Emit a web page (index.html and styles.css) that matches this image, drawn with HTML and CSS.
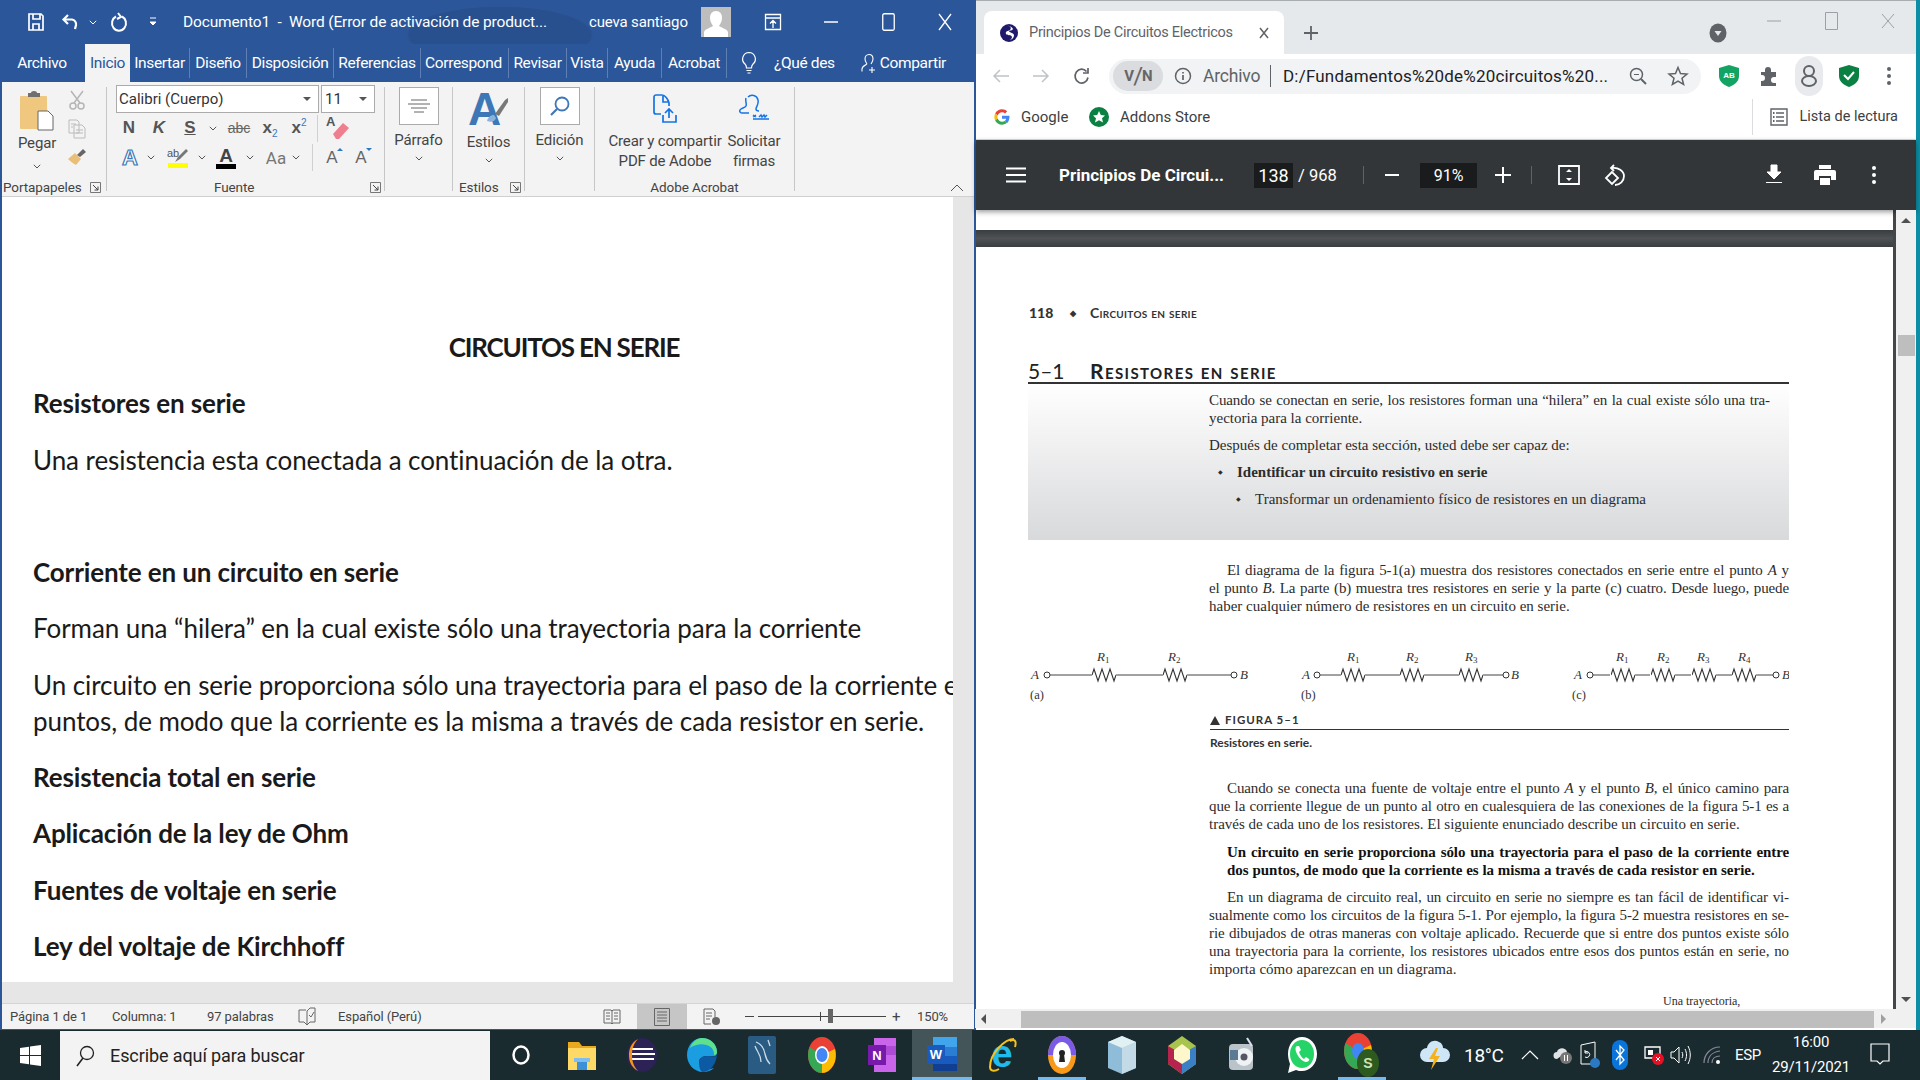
FILE: index.html
```html
<!DOCTYPE html>
<html lang="es">
<head>
<meta charset="utf-8">
<title>Word y Chrome</title>
<link rel="stylesheet" href="styles.css">
</head>
<body>
<svg class="defs" aria-hidden="true">
  <symbol id="chev" viewBox="0 0 8 5"><path d="M.8.8 4 4 7.2.8" fill="none" stroke="#555" stroke-width="1"/></symbol>
  <symbol id="launch" viewBox="0 0 11 11"><path d="M.5.5h10v10H.5z" fill="none" stroke="#777"/><path d="M3 3l5 5M8 4.5V8H4.5" fill="none" stroke="#444"/></symbol>
  <symbol id="res" viewBox="0 0 24 16"><path d="M0 8l2-6 4 12 4-12 4 12 4-12 4 12 2-6" fill="none" stroke="#333" stroke-width="1.1"/></symbol>
</svg>
<div class="desktop">
  <div class="windows">
    <section class="word">
      <header class="wtitle">
        <svg class="ic" width="18" height="20" viewBox="0 0 18 20"><path d="M2 2h12l2 2v14H2zM6 2v5h7V2M6 18v-6h6v6" fill="none" stroke="#fff" stroke-width="1.7"/></svg>
        <svg class="ic" width="20" height="20" viewBox="0 0 20 20"><path d="M7 3 2.500 7.500 7 12M3 7.500h8a5 5 0 0 1 4 5.500l-1 4" fill="none" stroke="#fff" stroke-width="2.200"/></svg>
        <svg class="ic" width="8" height="5"><path d="M.8.800 4 4 7.200.800" fill="none" stroke="#fff"/></svg>
        <svg class="ic" width="18" height="20" viewBox="0 0 18 20"><path d="M6 4.500a7 7.500 0 1 0 6 0M8 1l3 4-4 2" fill="none" stroke="#fff" stroke-width="2"/></svg>
        <svg class="ic" width="8" height="10" viewBox="0 0 8 10"><path d="M1 1h6M1 5l3 3 3-3z" fill="#fff" stroke="#fff"/></svg>
        <span></span>
        <span class="wt-name">Documento1&nbsp; - &nbsp;Word (Error de activación de product...</span>
        <span class="wt-user">cueva santiago</span>
        <svg class="ic" width="30" height="30" viewBox="0 0 30 30"><path fill="#bdbdbd" d="M0 0h30v30H0z"/><path fill="#fff" d="M15 4c4 0 6 3 6 7s-2 6-3 8c3 2 8 3 9 6v5H3v-5c1-3 6-4 9-6-1-2-3-4-3-8s2-7 6-7z"/></svg>
        <svg class="ic" width="18" height="18" viewBox="0 0 18 18"><path d="M1.500 1.500h15v15h-15zM1.500 5h15M9 15V8M6 10.500l3-3 3 3" fill="none" stroke="#fff" stroke-width="1.300"/></svg>
        <svg class="ic" width="14" height="2"><path d="M0 1h14" stroke="#fff" stroke-width="1.500"/></svg>
        <svg class="ic" width="13" height="18"><rect x=".75" y=".75" width="11.500" height="16.500" rx="1.500" fill="none" stroke="#fff" stroke-width="1.300"/></svg>
        <svg class="ic" width="14" height="18"><path d="M1 1l12 16M13 1 1 17" stroke="#fff" stroke-width="1.300"/></svg>
      </header>
      <nav class="wtabs">
        <span class="tab tab-arch">Archivo</span>
        <span class="tab tab-act">Inicio</span>
        <span class="tab tab-ins">Insertar</span>
        <span class="tab tab-dis">Diseño</span>
        <span class="tab tab-dip">Disposición</span>
        <span class="tab tab-ref">Referencias</span>
        <span class="tab tab-cor">Correspond</span>
        <span class="tab tab-rev">Revisar</span>
        <span class="tab tab-vis">Vista</span>
        <span class="tab tab-ayu">Ayuda</span>
        <span class="tab tab-acr">Acrobat</span>
        <svg class="tab-bulb" width="16" height="24" viewBox="0 0 16 24"><path d="M8 1.500a6.500 6.500 0 0 0-4 11.500c1 1 1.500 3 1.500 4h5c0-1 .5-3 1.500-4A6.500 6.500 0 0 0 8 1.500zM5.500 19.500h5M6.500 22h3" fill="none" stroke="#fff" stroke-width="1.200"/></svg>
        <span class="tab-tell">¿Qué des</span>
        <svg class="tab-person" width="17" height="20" viewBox="0 0 17 20"><path d="M8 1.500c2.500 0 4 2 4 4.500s-1.500 4-2 5M6 11c-1.500 1-5 2-5 5v2.500M8 1.500c-2.500 0-4 2-4 4.500s1.500 4 2 5M11 14v6M8 17h6" fill="none" stroke="#fff" stroke-width="1.100"/></svg>
        <span class="tab-share">Compartir</span>
      </nav>
      <div class="ribbon">
        <div class="group g-clip">
          <div class="g-body clip-body">
            <div class="big-btn">
              <svg width="36" height="42" viewBox="0 0 36 42"><rect x="1" y="5" width="27" height="33" rx="1" fill="#efc77f"/><path d="M9 5V2h3a3 2 0 0 1 6 0h3v4H9z" fill="#6f6f6f"/><path d="M19 20h10l5 5v14H19z" fill="#fff" stroke="#666"/></svg>
              <span class="rb-t pegar">Pegar</span>
              <svg class="chev"><use href="#chev"/></svg>
            </div>
            <div class="clip-tools">
              <svg width="18" height="20" viewBox="0 0 18 20"><path d="M3 1l9 12M15 1 6 13" stroke="#b5b5b5" stroke-width="1.500"/><circle cx="5" cy="16" r="3" fill="none" stroke="#b5b5b5" stroke-width="1.500"/><circle cx="13" cy="16" r="3" fill="none" stroke="#b5b5b5" stroke-width="1.500"/></svg>
              <svg width="18" height="20" viewBox="0 0 18 20"><path d="M1 1h8l2 2v11H1zM6 6h8l3 3v10H6z" fill="#f3f3f3" stroke="#bbb"/><path d="M3 5h5M3 8h2M8 11h7M8 14h7" stroke="#bbb"/></svg>
              <svg width="20" height="18" viewBox="0 0 20 18"><path d="M1 11l7-6 6 6-5 6c-2-1-5-3-8-6z" fill="#e9bf77"/><path d="M10 7l6-6 3 3-6 5z" fill="#666"/></svg>
            </div>
          </div>
          <div class="g-label lab-clip"><span>Portapapeles</span><svg class="launch"><use href="#launch"/></svg></div>
        </div>
        <div class="group g-font">
          <div class="g-body font-body">
            <div class="font-row1">
              <div class="combo combo-font"><span>Calibri (Cuerpo)</span><i class="caret"></i></div>
              <div class="combo combo-size"><span>11</span><i class="caret"></i></div>
            </div>
            <div class="font-row2">
              <b class="fmt">N</b><b class="fmt"><em>K</em></b><b class="fmt und">S</b><svg class="chev"><use href="#chev"/></svg>
              <span class="fmt abc">abc</span><b class="fmt">x<sub class="sub">2</sub></b><b class="fmt">x<sup class="sup">2</sup></b>
              <span></span><i class="vsep"></i>
              <svg width="26" height="26" viewBox="0 0 26 26"><path d="M9 19l10-11 6 5-10 11h-3z" fill="#ee7f8e"/><text x="2" y="11" class="svg-a">A</text></svg>
            </div>
            <div class="font-row3">
              <span class="a-fx">A</span><svg class="chev"><use href="#chev"/></svg>
              <span class="hl"><svg width="22" height="15" viewBox="0 0 22 15"><text x="0" y="9" class="svg-ab">ab</text><path d="M8 14l3-5 8-8 2 2-8 8z" fill="#777"/></svg><i class="bar bar-y"></i></span><svg class="chev"><use href="#chev"/></svg>
              <span class="colA"><b>A</b><i class="bar bar-k"></i></span><svg class="chev"><use href="#chev"/></svg>
              <span></span><span class="aa">Aa</span><svg class="chev"><use href="#chev"/></svg>
              <span></span><i class="vsep"></i><span></span>
              <span class="grow">A<i class="up"></i></span><span class="grow">A<i class="down"></i></span>
            </div>
          </div>
          <div class="g-label lab-font"><span>Fuente</span><svg class="launch"><use href="#launch"/></svg></div>
        </div>
        <div class="group g-par">
          <div class="g-body col-c">
            <div class="boxbtn"><svg width="22" height="14" viewBox="0 0 22 14"><path d="M3 1h16M0 5h22M3 9h16M6 13h10" stroke="#666"/></svg></div>
            <span class="rb-t rb-box">Párrafo</span>
            <svg class="chev"><use href="#chev"/></svg>
          </div>
        </div>
        <div class="group g-sty">
          <div class="g-body col-c">
            <svg class="sty-ic" width="42" height="38" viewBox="0 0 42 38"><text x="0" y="35" class="svg-sty">A</text><path d="M19 31c1-4 4-6 7-6l2 3c-1 3-4 5-9 3z" fill="#8ab3dc"/><path d="M27 24l10-14 3-2 0 4-9 14z" fill="#787878"/></svg>
            <span class="rb-t">Estilos</span>
            <svg class="chev"><use href="#chev"/></svg>
          </div>
          <div class="g-label lab-sty"><span>Estilos</span><svg class="launch"><use href="#launch"/></svg></div>
        </div>
        <div class="group g-edi">
          <div class="g-body col-c">
            <div class="boxbtn"><svg width="22" height="22" viewBox="0 0 22 22"><circle cx="13" cy="9" r="6.500" fill="none" stroke="#3e77b6" stroke-width="1.800"/><path d="M8 14l-6 6" stroke="#3e77b6" stroke-width="2.200"/></svg></div>
            <span class="rb-t rb-box">Edición</span>
            <svg class="chev"><use href="#chev"/></svg>
          </div>
        </div>
        <div class="group g-acr">
          <div class="g-body acr-body">
            <div class="acr-btn">
              <svg width="24" height="30" viewBox="0 0 24 30"><path d="M8 20H3a2 2 0 0 1-2-2V3a2 2 0 0 1 2-2h6c3 0 6 4 7 8v3M10 2v6h6M16 15v9M12 19l4-4 4 4M10 21v7h13v-7" fill="none" stroke="#1473e6" stroke-width="1.700"/></svg>
              <span class="rb-t">Crear y compartir<br>PDF de Adobe</span>
            </div>
            <div class="acr-btn">
              <svg width="32" height="30" viewBox="0 0 32 30"><path d="M10 3c3-3 9-2 10 3 1 4-2 7-2 9 0 1 1 2 3 2M11 19H4c-1 0-3-1-2-3 1-2 5-2 6-4s-1-5 0-8M15 25h16M15 21l3 2m0-2-3 2M21 23l2-2 1 2 2-2 1 2 2-2" fill="none" stroke="#1473e6" stroke-width="1.500"/></svg>
              <span class="rb-t">Solicitar<br>firmas</span>
            </div>
          </div>
          <div class="g-label lab-acr"><span>Adobe Acrobat</span></div>
        </div>
        <svg class="collapse" width="14" height="8" viewBox="0 0 14 8"><path d="M1 7l6-6 6 6" fill="none" stroke="#555"/></svg>
      </div>
      <div class="docarea">
        <article class="page">
          <p class="pg pg-title">CIRCUITOS EN SERIE</p>
          <p class="pg pg-b">Resistores en serie</p>
          <p class="pg">Una resistencia esta conectada a continuación de la otra.</p>
          <p class="pg">&nbsp;</p>
          <p class="pg pg-b">Corriente en un circuito en serie</p>
          <p class="pg">Forman una “hilera” en la cual existe sólo una trayectoria para la corriente</p>
          <p class="pg">Un circuito en serie proporciona sólo una trayectoria para el paso de la corriente e<br>puntos, de modo que la corriente es la misma a través de cada resistor en serie.</p>
          <p class="pg pg-b">Resistencia total en serie</p>
          <p class="pg pg-b">Aplicación de la ley de Ohm</p>
          <p class="pg pg-b">Fuentes de voltaje en serie</p>
          <p class="pg pg-b">Ley del voltaje de Kirchhoff</p>
        </article>
      </div>
      <div class="docbottom"></div>
      <footer class="wstatus">
        <span class="st st-pag">Página 1 de 1</span>
        <span class="st st-col">Columna: 1</span>
        <span class="st st-pal">97 palabras</span>
        <svg class="st-book" width="18" height="20" viewBox="0 0 18 20"><path d="M8 3H1v12h5l3 3V4M9 4l3-3h5v14h-5l-3 3M11 8l2 2 3-5" fill="none" stroke="#666"/></svg>
        <span class="st st-lang">Español (Perú)</span>
        <svg class="st-read" width="18" height="16" viewBox="0 0 18 16"><path d="M1 1h7l1 1 1-1h7v13h-7l-1 1-1-1H1zM9 2v12M3 4h4M3 7h4M3 10h4M11 4h4M11 7h4M11 10h4" fill="none" stroke="#666"/></svg>
        <span class="st-printbtn"><svg width="16" height="18" viewBox="0 0 16 18"><path d="M.5.500h15v17H.500zM3 4h10M3 7h10M3 10h10M3 13h10" fill="none" stroke="#666"/></svg></span>
        <svg class="st-web" width="18" height="18" viewBox="0 0 18 18"><path d="M1 1h9l2 2v6M1 1v15h7M3 5h6M3 8h6M3 11h4" fill="none" stroke="#666"/><circle cx="13" cy="13" r="4" fill="#666"/></svg>
        <i class="z-minus"></i>
        <div class="z-track"><i class="z-tick"></i><i class="z-thumb"></i></div>
        <span class="z-plus">+</span>
        <span class="st st-zoom">150%</span>
      </footer>
    </section>
    <section class="chrome">
      <div class="c-tabs">
        <span></span>
        <div class="c-tab">
          <svg width="18" height="18" viewBox="0 0 18 18"><circle cx="9" cy="9" r="9" fill="#1f1a6b"/><path d="M6 2c4-1 6 2 4 4-2 1-5 1-4 4 1 2 5 0 6 3 0 2-2 3-4 3 5 0 6-3 6-5-1-3-5-2-5-4 1-1 3 0 4-2-1-2-4-4-7-3z" fill="#fff"/></svg>
          <span class="c-tabtext">Principios De Circuitos Electricos</span>
          <svg class="c-tabx" width="10" height="12"><path d="M1 1l8 10M9 1 1 11" stroke="#5f6368" stroke-width="1.500"/></svg>
        </div>
        <svg class="ic c-low" width="14" height="14"><path d="M7 0v14M0 7h14" stroke="#5f6368" stroke-width="1.800"/></svg>
        <span></span>
        <svg class="ic c-low" width="18" height="20"><ellipse cx="9" cy="10" rx="8.500" ry="9.500" fill="#5f6368"/><path d="M5.500 8h7L9 13z" fill="#e6e9ec"/></svg>
        <span></span>
        <svg class="ic c-ctl" width="14" height="2"><path d="M0 1h14" stroke="#9aa0a6"/></svg>
        <svg class="ic c-ctl" width="13" height="18"><path d="M.5.500h12v17H.500z" fill="none" stroke="#9aa0a6"/></svg>
        <svg class="ic c-ctl" width="14" height="16"><path d="M1 1l12 14M13 1 1 15" stroke="#9aa0a6"/></svg>
      </div>
      <div class="c-bar">
        <svg class="ic" width="16" height="14"><path d="M16 7H2M7 1 1 7l6 6" fill="none" stroke="#c0c3c7" stroke-width="1.500"/></svg>
        <svg class="ic" width="16" height="14"><path d="M0 7h14M9 1l6 6-6 6" fill="none" stroke="#c0c3c7" stroke-width="1.500"/></svg>
        <svg class="ic" width="18" height="18" viewBox="0 0 18 18"><path d="M15 10.500a6.500 7 0 1 1-1.500-6M15 1v5h-5" fill="none" stroke="#5f6368" stroke-width="1.700"/></svg>
        <div class="omni">
          <span class="vpn">V<i>/</i>N</span>
          <svg class="om-info" width="18" height="18"><circle cx="9" cy="9" r="7.500" fill="none" stroke="#5f6368" stroke-width="1.500"/><path d="M9 8v5M9 5v1.500" stroke="#5f6368" stroke-width="1.700"/></svg>
          <span class="om-arch">Archivo</span>
          <i class="om-sep"></i>
          <span class="om-url">D:/Fundamentos%20de%20circuitos%20...</span>
          <svg class="om-z" width="18" height="18"><circle cx="7.500" cy="7.500" r="6" fill="none" stroke="#5f6368" stroke-width="1.500"/><path d="M12 12l5 5" stroke="#5f6368" stroke-width="2"/><path d="M5 7.500h5" stroke="#5f6368"/></svg>
          <svg class="om-star" width="20" height="20" viewBox="0 0 20 20"><path d="M10 1.500l2.500 6 6.500.500-5 4.200 1.600 6.300-5.600-3.400-5.600 3.400L6 12.200 1 8l6.500-.500z" fill="none" stroke="#5f6368" stroke-width="1.500"/></svg>
        </div>
        <div class="c-ext">
          <svg width="20" height="22" viewBox="0 0 20 22"><path d="M10 0 20 3v8c0 6-5 9-10 11C5 20 0 17 0 11V3z" fill="#13a463"/><text x="10" y="13" class="svg-abt">AB</text></svg>
          <svg width="20" height="20" viewBox="0 0 20 20"><path d="M2 6h4V4a3 3 0 0 1 6 0v2h5v5h-2a3 3 0 0 0 0 6h2v3H2v-5h1a3 3 0 0 0 0-6H2z" fill="#5f6368"/></svg>
          <span class="c-avatar"><svg width="16" height="22" viewBox="0 0 16 22"><circle cx="8" cy="6" r="5" fill="none" stroke="#5f6368" stroke-width="2"/><ellipse cx="8" cy="16" rx="7" ry="5" fill="none" stroke="#5f6368" stroke-width="2"/></svg></span>
          <svg width="20" height="22" viewBox="0 0 20 22"><path d="M10 0 20 3v8c0 6-5 9-10 11C5 20 0 17 0 11V3z" fill="#0b8043"/><path d="M5 10l4 4 6-7" fill="none" stroke="#fff" stroke-width="2"/></svg>
          <svg width="4" height="18"><circle cx="2" cy="2" r="2" fill="#5f6368"/><circle cx="2" cy="9" r="2" fill="#5f6368"/><circle cx="2" cy="16" r="2" fill="#5f6368"/></svg>
        </div>
      </div>
      <div class="c-marks">
        <svg width="16" height="16" viewBox="0 0 48 48"><path fill="#ea4335" d="M24 10c3.500 0 6.700 1.300 9.100 3.500l6.600-6.600C35.700 3.200 30.200 1 24 1 15 1 7.200 6.200 3.400 13.700l7.700 6C13 14 18 10 24 10z"/><path fill="#4285f4" d="M46.500 24.500c0-1.600-.2-3.100-.4-4.500H24v9h12.700c-.6 3-2.200 5.400-4.700 7.100l7.300 5.700c4.300-4 6.700-9.900 7.200-17.300z"/><path fill="#fbbc05" d="M11.100 28.300C10.600 26.900 10.300 25.500 10.300 24s.3-2.900.8-4.300l-7.700-6C1.900 16.800 1 20.300 1 24s.9 7.200 2.400 10.300z"/><path fill="#34a853" d="M24 47c6.200 0 11.400-2 15.300-5.500L32 35.800c-2 1.400-4.700 2.200-8 2.200-6 0-11-4-12.900-9.700l-7.700 6C7.200 41.800 15 47 24 47z"/></svg>
        <span class="mk-g">Google</span>
        <svg class="mk-ic" width="20" height="20"><circle cx="10" cy="10" r="10" fill="#0b8043"/><path d="M10 4l1.800 4 4.200.400-3 2.800 1 4.300-4-2.300-4 2.300 1-4.300-3-2.800 4.200-.400z" fill="#fff"/></svg>
        <span class="mk-a">Addons Store</span>
        <i class="mk-sep"></i>
        <svg class="mk-list" width="18" height="18" viewBox="0 0 18 18"><path d="M1 1h16v16H1zM6 5h8M6 9h8M6 13h8" fill="none" stroke="#5f6368" stroke-width="1.400"/><path d="M3 4h1.500v2H3zM3 8h1.500v2H3zM3 12h1.500v2H3z" fill="#5f6368"/></svg>
        <span class="mk-r">Lista de lectura</span>
      </div>
      <div class="p-bar">
        <svg class="ic" width="20" height="16"><path d="M0 1.500h20M0 8h20M0 14.500h20" stroke="#fff" stroke-width="2"/></svg>
        <span></span>
        <span class="p-title">Principios De Circui...</span>
        <span></span>
        <span class="p-num p-big">138</span>
        <span></span>
        <span class="p-of">/ 968</span>
        <span></span>
        <i class="p-sep"></i>
        <svg class="ic" width="14" height="2"><path d="M0 1h14" stroke="#fff" stroke-width="2"/></svg>
        <span class="p-num">91%</span>
        <svg class="ic" width="16" height="16"><path d="M8 0v16M0 8h16" stroke="#fff" stroke-width="2"/></svg>
        <span></span>
        <i class="p-sep"></i>
        <span></span>
        <svg class="ic" width="22" height="20" viewBox="0 0 22 20"><path d="M1 1h20v18H1z" fill="none" stroke="#fff" stroke-width="1.800"/><path d="M8 7l3-3 3 3zM8 13l3 3 3-3z" fill="#fff"/></svg>
        <svg class="ic" width="22" height="22" viewBox="0 0 22 22"><path d="M10 1l-3 3 3 3M8 4c6-1 12 3 12 8s-4 9-9 9" fill="none" stroke="#fff" stroke-width="1.800"/><path d="M8 8l-6 6 6 6 6-6z" fill="none" stroke="#fff" stroke-width="1.800"/></svg>
        <span></span>
        <svg class="ic" width="16" height="20" viewBox="0 0 16 20"><path d="M5 0h6v7h4l-7 7-7-7h4zM0 17.500h16" fill="#fff" stroke="#fff" stroke-width="1"/></svg>
        <span></span>
        <svg class="ic" width="22" height="20" viewBox="0 0 22 20"><path d="M5 0h12v4H5zM2 5h18a2 2 0 0 1 2 2v8h-5v-4H5v4H0V7a2 2 0 0 1 2-2zM6 13h10v7H6z" fill="#fff"/></svg>
        <span></span>
        <svg class="ic" width="4" height="18"><circle cx="2" cy="2" r="2" fill="#fff"/><circle cx="2" cy="9" r="2" fill="#fff"/><circle cx="2" cy="16" r="2" fill="#fff"/></svg>
      </div>
      <div class="p-body">
        <div class="p-main">
          <div class="p-top"></div>
          <div class="p-gap"></div>
          <article class="p-page">
            <div class="bk-head"><b>118</b><i class="dia">◆</i><span>Circuitos en serie</span></div>
            <h2 class="bk-h"><span>5–1</span><span class="bk-ht">Resistores en serie</span></h2>
            <div class="bk-box">
              <div class="ln j w561">Cuando se conectan en serie, los resistores forman una “hilera” en la cual existe sólo una tra-</div>
              <div class="ln">yectoria para la corriente.</div>
              <div class="ln gap9">Después de completar esta sección, usted debe ser capaz de:</div>
              <div class="ln gap9 bl1"><i class="dia2">◆</i><b>Identificar un circuito resistivo en serie</b></div>
              <div class="ln gap9 bl2"><i class="dia2">◆</i>Transformar un ordenamiento físico de resistores en un diagrama</div>
            </div>
            <div class="txt gap21">
              <div class="ln j ind">El diagrama de la figura 5-1(a) muestra dos resistores conectados en serie entre el punto <em>A</em> y</div>
              <div class="ln j">el punto <em>B</em>. La parte (b) muestra tres resistores en serie y la parte (c) cuatro. Desde luego, puede</div>
              <div class="ln">haber cualquier número de resistores en un circuito en serie.</div>
            </div>
            <svg class="bk-fig" width="761" height="92" viewBox="1028 615 761 92">
              <g class="f-line"><path d="M1050 675h42M1116 675h47M1187 675h44M1320 675h21M1365 675h35M1424 675h35M1483 675h20M1593 675h17M1635 675h15M1675 675h16M1716 675h16M1756 675h17"/></g>
              <g class="f-cir"><circle cx="1047" cy="675" r="3"/><circle cx="1234" cy="675" r="3"/><circle cx="1317" cy="675" r="3"/><circle cx="1506" cy="675" r="3"/><circle cx="1590" cy="675" r="3"/><circle cx="1776" cy="675" r="3"/></g>
              <use href="#res" x="1092" y="667" width="24" height="16"/><use href="#res" x="1163" y="667" width="24" height="16"/>
              <use href="#res" x="1341" y="667" width="24" height="16"/><use href="#res" x="1400" y="667" width="24" height="16"/><use href="#res" x="1459" y="667" width="24" height="16"/>
              <use href="#res" x="1611" y="667" width="24" height="16"/><use href="#res" x="1651" y="667" width="24" height="16"/><use href="#res" x="1692" y="667" width="24" height="16"/><use href="#res" x="1732" y="667" width="24" height="16"/>
              <g class="f-t">
                <text x="1031" y="679">A</text><text x="1240" y="679">B</text><text x="1302" y="679">A</text><text x="1511" y="679">B</text><text x="1574" y="679">A</text><text x="1782" y="679">B</text>
                <text x="1097" y="661">R<tspan class="f-s" dy="2">1</tspan></text><text x="1168" y="661">R<tspan class="f-s" dy="2">2</tspan></text>
                <text x="1347" y="661">R<tspan class="f-s" dy="2">1</tspan></text><text x="1406" y="661">R<tspan class="f-s" dy="2">2</tspan></text><text x="1465" y="661">R<tspan class="f-s" dy="2">3</tspan></text>
                <text x="1616" y="661">R<tspan class="f-s" dy="2">1</tspan></text><text x="1657" y="661">R<tspan class="f-s" dy="2">2</tspan></text><text x="1697" y="661">R<tspan class="f-s" dy="2">3</tspan></text><text x="1738" y="661">R<tspan class="f-s" dy="2">4</tspan></text>
              </g>
              <g class="f-p"><text x="1030" y="699">(a)</text><text x="1301" y="699">(b)</text><text x="1572" y="699">(c)</text></g>
            </svg>
            <div class="bk-figt"><i class="tri"></i>FIGURA 5–1</div>
            <div class="bk-figc">Resistores en serie.</div>
            <div class="txt gap27">
              <div class="ln j ind">Cuando se conecta una fuente de voltaje entre el punto <em>A</em> y el punto <em>B</em>, el único camino para</div>
              <div class="ln j">que la corriente llegue de un punto al otro en cualesquiera de las conexiones de la figura 5-1 es a</div>
              <div class="ln">través de cada uno de los resistores. El siguiente enunciado describe un circuito en serie.</div>
            </div>
            <div class="txt gap10 bold">
              <div class="ln j ind">Un circuito en serie proporciona sólo una trayectoria para el paso de la corriente entre</div>
              <div class="ln ind">dos puntos, de modo que la corriente es la misma a través de cada resistor en serie.</div>
            </div>
            <div class="txt gap9">
              <div class="ln j ind">En un diagrama de circuito real, un circuito en serie no siempre es tan fácil de identificar vi-</div>
              <div class="ln j">sualmente como los circuitos de la figura 5-1. Por ejemplo, la figura 5-2 muestra resistores en se-</div>
              <div class="ln j">rie dibujados de otras maneras con voltaje aplicado. Recuerde que si entre dos puntos existe sólo</div>
              <div class="ln j">una trayectoria para la corriente, los resistores ubicados entre esos dos puntos están en serie, no</div>
              <div class="ln">importa cómo aparezcan en un diagrama.</div>
            </div>
            <div class="bk-side">Una trayectoria,</div>
          </article>
        </div>
        <i class="p-strip"></i>
        <div class="p-vs"><i class="ar-up"></i><i class="p-thumb"></i><i class="ar-dn"></i></div>
      </div>
      <div class="p-hs"><i class="ar-l"></i><i class="p-hthumb"></i><i class="ar-r"></i></div>
    </section>
  </div>
  <footer class="taskbar">
    <svg class="tb-win" width="21" height="21" viewBox="0 0 21 21"><path fill="#fff" d="M0 3l9-1.300V10H0zM10 1.500 21 0v10H10zM0 11h9v8.300L0 18zM10 11h11v10l-11-1.500z"/></svg>
    <div class="tb-search">
      <svg width="20" height="22" viewBox="0 0 20 22"><circle cx="12" cy="8" r="6.500" fill="none" stroke="#222" stroke-width="1.300"/><path d="M8 13l-6 8" stroke="#222" stroke-width="1.500"/></svg>
      <span>Escribe aquí para buscar</span>
    </div>
    <div class="tb-apps">
      <span class="app"><svg width="18" height="20"><ellipse cx="9" cy="10" rx="7.500" ry="8.500" fill="none" stroke="#fff" stroke-width="2.500"/></svg></span>
      <span class="app"><svg width="28" height="30" viewBox="0 0 28 30"><path fill="#e8a920" d="M0 2h11l3 4h14v24H0z"/><path fill="#ffd966" d="M0 8h28v22H0z"/><path fill="#3d8fd6" d="M9 18h10v12H9z"/><path fill="#7dbdf0" d="M6 18h16v4H6z"/></svg></span>
      <span class="app"><svg width="30" height="34" viewBox="0 0 30 34"><ellipse cx="15" cy="17" rx="15" ry="17" fill="#2c2255"/><path d="M4 11h22M2 16h26M3 21h24" stroke="#fff" stroke-width="2"/><path d="M11 1C4 5 2 11 2 17s2 12 9 16C6 28 5 22 5 17s1-11 6-16z" fill="#f7941e"/></svg></span>
      <span class="app"><svg width="30" height="34" viewBox="0 0 30 34"><path d="M15 0C7 0 0 7 0 17c0 9 7 17 16 17 5 0 9-2 11-4-8 3-15-1-15-6 0-3 3-6 8-6 5 0 10 2 10-4C30 6 23 0 15 0z" fill="#1b9de2"/><path d="M12 24c0-3 3-6 8-6 5 0 10 2 10-2 0 8-6 18-14 18-3 0-4-6-4-10z" fill="#0c59a4"/><path d="M15 0c8 0 15 6 15 14 0 2-1 3-3 3C28 6 12 3 3 10 5 4 10 0 15 0z" fill="#5fe08a"/></svg></span>
      <span class="app"><svg width="28" height="38" viewBox="0 0 28 38"><rect width="28" height="38" rx="2" fill="#2a5c83"/><path d="M8 6c5 2 8 6 9 12 1 5 3 8 5 10M7 10c2 6 6 8 6 16M20 4l2 6" fill="none" stroke="#c9dbe8" stroke-width="1.300"/></svg></span>
      <span class="app"><svg width="28" height="36" viewBox="0 0 28 36"><ellipse cx="14" cy="18" rx="14" ry="18" fill="#e94235"/><path d="M14 18 1.500 10A14 18 0 0 0 14 36z" fill="#34a853"/><path d="M14 18 14 36a14 18 0 0 0 13-24z" fill="#fbbc05"/><ellipse cx="14" cy="18" rx="7" ry="9" fill="#fff"/><ellipse cx="14" cy="18" rx="5.500" ry="7" fill="#4285f4"/></svg></span>
      <span class="app"><svg width="28" height="34" viewBox="0 0 28 34"><path fill="#ca64ea" d="M6 0h22v34H6z"/><path fill="#ae4bd5" d="M18 8h10v9H18z"/><path fill="#7719aa" d="M0 7h18v20H0z"/><text x="9" y="22" class="svg-n">N</text></svg></span>
      <span class="app app-act"><svg width="30" height="34" viewBox="0 0 30 34"><path fill="#41a5ee" d="M6 0h24v10H6z"/><path fill="#2b7cd3" d="M6 10h24v9H6z"/><path fill="#185abd" d="M6 19h24v8H6z"/><path fill="#103f91" d="M6 27h24v7H6z"/><path fill="#185abd" d="M0 8h18v19H0z"/><text x="9" y="22" class="svg-n">W</text></svg></span>
      <span class="app"><svg width="30" height="36" viewBox="0 0 30 36"><text x="15" y="30" class="svg-ie">e</text><path d="M27 2C18 2 3 16 3 30c0 4 4 5 9 2M23 4c4-2 7-1 5 6" fill="none" stroke="#f5c21a" stroke-width="2"/></svg></span>
      <span class="app app-on"><svg width="28" height="38" viewBox="0 0 28 38"><ellipse cx="14" cy="19" rx="14" ry="19" fill="#f79a1c"/><path d="M14 0C6 0 0 8 0 19h28C28 8 22 0 14 0z" fill="#7b5be6"/><ellipse cx="14" cy="19" rx="9" ry="13" fill="#fff"/><circle cx="14" cy="17" r="3" fill="#222"/><path d="M12 18h4l1 8h-6z" fill="#222"/></svg></span>
      <span class="app"><svg width="28" height="38" viewBox="0 0 28 38"><path d="M14 0 28 6v26l-14 6-14-6V6z" fill="#8fbcd8"/><path d="M14 12 28 6v26l-14 6z" fill="#c3dbe6"/><path d="M14 0 28 6l-14 6L0 6z" fill="#e0f0f3"/></svg></span>
      <span class="app"><svg width="28" height="38" viewBox="0 0 28 38"><path d="M14 0 28 10v18L14 38 0 28V10z" fill="#a9c44c"/><path d="M0 10l14 8v20L0 28z" fill="#b4244c"/><path d="M28 10 14 18v20l14-10z" fill="#3b7fc4"/><path d="M14 8l8 6v9l-8 5-8-5v-9z" fill="#fff7cc"/></svg></span>
      <span class="app"><svg width="30" height="34" viewBox="0 0 30 34"><rect x="2" y="6" width="24" height="26" rx="4" fill="#b9c3c9"/><circle cx="17" cy="19" r="9" fill="#eef2f4"/><circle cx="17" cy="19" r="3.500" fill="#556"/><path d="M3 12h8v10H3z" fill="#5b7a94"/><path d="M20 0l5 8" stroke="#dde" stroke-width="2"/></svg></span>
      <span class="app"><svg width="30" height="36" viewBox="0 0 30 36"><path d="M15 0C7 0 1 7 1 17c0 4 1 7 2 10L1 36l8-3c2 1 4 1 6 1 8 0 15-7 15-17S23 0 15 0z" fill="#fff"/><ellipse cx="15" cy="17" rx="12" ry="14" fill="#25d366"/><path d="M10 9c-2 1-2 4 0 8s6 8 9 8c2 0 4-2 3-3l-3-2-2 2c-2-1-4-4-5-7l2-2-2-4z" fill="#fff"/></svg></span>
      <span class="app app-on"><svg width="36" height="44" viewBox="0 0 36 44"><ellipse cx="14" cy="18" rx="14" ry="18" fill="#e94235"/><path d="M14 18 1.500 10A14 18 0 0 0 14 36z" fill="#34a853"/><path d="M14 18 14 36a14 18 0 0 0 13-24z" fill="#fbbc05"/><ellipse cx="14" cy="18" rx="6" ry="8" fill="#4285f4"/><ellipse cx="24" cy="30" rx="11" ry="14" fill="#2d5a1e"/><text x="24" y="35" class="svg-s">S</text></svg></span>
    </div>
    <div class="tb-tray">
      <svg class="tr-w" width="32" height="34" viewBox="0 0 32 34"><path d="M8 24a7 7 0 0 1 0-14c1-6 7-9 12-6 3 1 4 4 4 6a7 7 0 0 1 0 14z" fill="#cfe6f7"/><path d="M17 10l-7 11h5l-3 11 9-14h-5l3-8z" fill="#f5b21a"/></svg>
      <span class="tr-temp">18°C</span>
      <svg class="tr-up" width="18" height="10"><path d="M1 9l8-8 8 8" fill="none" stroke="#fff" stroke-width="1.200"/></svg>
      <svg class="tr-c" width="18" height="20" viewBox="0 0 18 20"><path d="M3 14a3.500 3.500 0 0 1 0-7c1-5 9-5 10 0z" fill="#dfe3e5"/><circle cx="12" cy="13" r="6" fill="#777"/><path d="M10.500 10v6M13.500 10v6" stroke="#fff"/></svg>
      <svg class="tr-t" width="20" height="26" viewBox="0 0 20 26"><path d="M1 3l14-3v22H1z" fill="none" stroke="#fff"/><path d="M5 10a3 3 0 1 1 0 5M5 8v3h3" fill="none" stroke="#fff"/><circle cx="15" cy="21" r="5" fill="#2b79c2"/></svg>
      <svg class="tr-b" width="16" height="30" viewBox="0 0 16 30"><rect width="16" height="30" rx="8" fill="#0a74da"/><path d="M4 10l8 10-4 4V6l4 4-8 10" fill="none" stroke="#fff" stroke-width="1.300"/></svg>
      <svg class="tr-p" width="20" height="20" viewBox="0 0 20 20"><path d="M1 2h15v11H1z" fill="none" stroke="#fff" stroke-width="1.300"/><path d="M4 5h5v5H4z" fill="#fff"/><ellipse cx="14" cy="14" rx="6" ry="6" fill="#e81123"/><path d="M12 12l4 4m0-4-4 4" stroke="#fff"/></svg>
      <svg class="tr-v" width="20" height="22" viewBox="0 0 20 22"><path d="M1 8h3l5-5v16l-5-5H1z" fill="none" stroke="#fff"/><path d="M12 8c1 2 1 4 0 6M15 5c2 4 2 8 0 12M18 2c3 6 3 12 0 18" fill="none" stroke="#fff"/></svg>
      <svg class="tr-f" width="20" height="20" viewBox="0 0 20 20"><path d="M2 18C2 10 8 2 18 2M6 18c0-6 4-11 12-12M10 18c0-4 3-7 8-7" fill="none" stroke="#889" stroke-width="1.200"/><circle cx="16" cy="17" r="2" fill="#fff"/></svg>
      <span class="tr-lang">ESP</span>
      <div class="tr-clock"><span>16:00</span><span>29/11/2021</span></div>
      <svg class="tr-n" width="20" height="24" viewBox="0 0 20 24"><path d="M1 1h18v17h-6l-3 3-3-3H1z" fill="none" stroke="#fff" stroke-width="1.200"/></svg>
    </div>
  </footer>
</div>
</body>
</html>
```

FILE: styles.css
```css
* { box-sizing: border-box; }
html, body { margin: 0; padding: 0; }
body { width: 1920px; height: 1080px; overflow: hidden; font-family: Roboto, "Liberation Sans", sans-serif; }
i { font-style: normal; display: block; }
svg { display: block; flex: none; overflow: visible; }
.defs { width: 0; height: 0; position: absolute; }
.desktop { width: 1920px; height: 1080px; display: flex; flex-direction: column; background: #0b8ea6; }
.windows { display: flex; height: 1030px; }
.ic { justify-self: center; }

/* WORD */
.word { width: 976px; display: flex; flex-direction: column; border-left: 2px solid #2b579a; border-right: 2px solid #2b579a; border-bottom: 1px solid #2b579a; background: #e6e6e6; }
.wtitle { height: 44px; flex: none; margin-left: -2px; padding-left: 18px; background: radial-gradient(ellipse 130px 40px at 500px 35px, #28508e 70%, transparent 72%), #2b579a; display: grid; align-items: center; grid-template-columns: 36px 34px 10px 42px 26px 17px 406px 112px 30px 84px 32px 82px 32px; color: #fff; font-size: 15px; }
.wt-name { font-size: 15.5px; letter-spacing: -.15px; white-space: nowrap; }
.wt-user { letter-spacing: -.15px; white-space: nowrap; }
.wtabs { height: 38px; flex: none; margin-left: -2px; margin-right: -2px; background: #2b579a; display: flex; align-items: center; color: #fff; font-size: 15.5px; letter-spacing: -.35px; }
.tab { height: 30px; display: flex; align-items: center; justify-content: center; border-right: 1px solid #5d7fb3; white-space: nowrap; flex: none; }
.tab-arch { width: 85px; border-right: 0; padding-right: 1px; }
.tab-act { width: 45px; height: 38px; background: #f3f3f3; color: #2b579a; border-right: 0; }
.tab-ins { width: 60px; }
.tab-dis { width: 57px; }
.tab-dip { width: 87px; }
.tab-ref { width: 87px; }
.tab-cor { width: 88px; justify-content: flex-start; padding-left: 4px; }
.tab-rev { width: 58px; }
.tab-vis { width: 41px; }
.tab-ayu { width: 54px; }
.tab-acr { width: 65px; }
.tab-bulb { margin-left: 14px; }
.tab-tell { margin-left: 17px; white-space: nowrap; }
.tab-person { margin-left: 26px; }
.tab-share { margin-left: 2px; white-space: nowrap; }

.ribbon { height: 115px; flex: none; background: #f3f3f3; border-bottom: 1px solid #d0d0d0; display: flex; padding-top: 5px; position: relative; color: #444; font-size: 15px; }
.group { height: 104px; border-right: 1px solid #c6c6c6; flex: none; display: flex; flex-direction: column; }
.g-body { height: 90px; flex: none; }
.g-label { height: 20px; flex: none; line-height: 20px; font-size: 13.5px; letter-spacing: -.1px; display: flex; align-items: center; white-space: nowrap; }
.g-clip { width: 105px; }
.g-font { width: 278px; }
.g-par { width: 68px; }
.g-sty { width: 72px; }
.g-edi { width: 70px; }
.g-acr { width: 200px; }
.launch { width: 11px; height: 11px; }
.chev { width: 8px; height: 5px; justify-self: center; }
.clip-body { display: grid; grid-template-columns: 50px 30px; padding-left: 10px; }
.big-btn { display: flex; flex-direction: column; align-items: center; padding-top: 4px; }
.rb-t { line-height: 20px; text-align: center; white-space: nowrap; letter-spacing: -.15px; }
.big-btn .chev { margin-top: 11px; }
.clip-tools { display: flex; flex-direction: column; align-items: center; padding-top: 3px; gap: 9px; }
.lab-clip { padding-left: 1px; gap: 8px; }
.font-body { padding-left: 9px; margin-top: -2px; height: 92px; }
.font-row1 { display: flex; gap: 2px; height: 28px; }
.combo { height: 28px; background: #fff; border: 1px solid #ababab; display: flex; align-items: center; justify-content: space-between; padding: 0 4px 0 2px; color: #333; font-size: 15px; }
.combo-font { width: 203px; }
.combo-size { width: 54px; padding-left: 3px; }
.caret { width: 0; height: 0; border: 4px solid transparent; border-top: 4px solid #555; border-bottom: 0; margin-right: 3px; }
.font-row2, .font-row3 { display: grid; justify-items: center; align-items: center; color: #555; }
.font-row2 { height: 30px; grid-template-columns: 26px 34px 28px 18px 34px 28px 30px 3px 1px 38px; }
.font-row3 { height: 29px; grid-template-columns: 28px 14px 40px 8px 40px 8px 6px 32px 8px 12px 1px 5px 28px 30px; }
.fmt { font-family: "Liberation Sans", sans-serif; font-size: 17px; color: #555; }
.fmt em { font-style: italic; }
.und { text-decoration: underline; }
.abc { font-size: 14px; text-decoration: line-through; color: #666; }
.sub, .sup { font-size: 10px; color: #3e77b6; font-weight: 400; line-height: 0; }
.vsep { width: 1px; height: 27px; background: #d0d0d0; }
.svg-a { font: 700 13px "Liberation Sans", sans-serif; fill: #555; }
.svg-ab { font: 11px "Liberation Sans", sans-serif; fill: #555; }
.svg-sty { font: 700 46px "Liberation Sans", sans-serif; fill: #3e77b6; }
.svg-abt { font: 700 8px "Liberation Sans", sans-serif; fill: #fff; text-anchor: middle; }
.svg-n { font: 700 13px "Liberation Sans", sans-serif; fill: #fff; text-anchor: middle; }
.svg-ie { font: 700 38px "Liberation Sans", sans-serif; fill: #1ebbee; text-anchor: middle; }
.svg-s { font: 700 14px "Liberation Sans", sans-serif; fill: #cfe3b8; text-anchor: middle; }
.a-fx { font: 700 22px "Liberation Sans", sans-serif; color: #fff; -webkit-text-stroke: 1.2px #3e77b6; }
.hl, .colA { display: flex; flex-direction: column; align-items: center; }
.colA b { font: 700 19px/17px "Liberation Sans", sans-serif; color: #444; }
.bar { width: 20px; height: 5px; }
.bar-y { background: #ffff00; }
.bar-k { background: #000; }
.aa { font-size: 17px; color: #777; }
.grow { font: 17px "Liberation Sans", sans-serif; color: #666; position: relative; }
.up, .down { position: absolute; left: 11px; top: 0; width: 0; height: 0; border: 3.5px solid transparent; }
.up { border-bottom-color: #2b79c2; top: -3px; }
.down { border-top-color: #2b79c2; }
.lab-font { padding-left: 107px; justify-content: space-between; padding-right: 3px; }
.col-c { display: flex; flex-direction: column; align-items: center; }
.boxbtn { width: 40px; height: 38px; background: #fff; border: 1px solid #ababab; display: flex; align-items: center; justify-content: center; flex: none; }
.rb-box { margin-top: 5px; }
.col-c .chev { margin-top: 6px; }
.sty-ic { margin-top: 3px; margin-bottom: 4px; }
.lab-sty { padding-left: 6px; gap: 11px; }
.acr-body { display: grid; grid-template-columns: 140px 38px; }
.acr-btn { display: flex; flex-direction: column; align-items: center; padding-top: 7px; }
.acr-btn .rb-t { margin-top: 7px; }
.lab-acr { justify-content: center; }
.collapse { position: absolute; right: 10px; top: 102px; }

.docarea { height: 785px; flex: none; padding-right: 21px; background: #e6e6e6; }
.page { height: 785px; background: #fff; padding: 132px 0 0 31px; overflow: hidden; font-family: Lato, "Liberation Sans", sans-serif; color: #1a1a1a; font-size: 26px; letter-spacing: -.07px; line-height: 36px; }
.pg { margin: 0 0 20.3px; white-space: nowrap; }
.pg-b { font-weight: 700; letter-spacing: -.13px; }
.pg-title { font-weight: 700; text-align: center; padding-left: 142px; letter-spacing: -1.2px; }
.docbottom { height: 21px; flex: none; background: #e6e6e6; }
.wstatus { height: 26px; flex: none; background: #f3f3f3; display: flex; align-items: center; font-size: 13px; color: #444; border-top: 1px solid #d4d4d4; position: relative; }
.st { white-space: nowrap; letter-spacing: -.1px; }
.st-pag { margin-left: 8px; width: 102px; }
.st-col { width: 95px; }
.st-pal { width: 91px; }
.st-book { width: 18px; }
.st-lang { margin-left: 22px; width: 265px; }
.st-read { margin-right: 16px; }
.st-printbtn { width: 50px; height: 25px; background: #c6c6c6; display: flex; align-items: center; justify-content: center; }
.st-web { margin-left: 16px; }
.z-minus { width: 9px; height: 1px; background: #444; margin-left: 24px; }
.z-track { width: 128px; height: 1px; background: #444; margin-left: 4px; position: relative; }
.z-tick { position: absolute; left: 62px; top: -4px; width: 1px; height: 9px; background: #444; }
.z-thumb { position: absolute; left: 70px; top: -7px; width: 5px; height: 14px; background: #666; }
.z-plus { margin-left: 6px; width: 16px; font-size: 15px; }
.st-zoom { margin-left: 9px; }

/* CHROME */
.chrome { width: 940px; display: flex; flex-direction: column; background: #fff; }
.c-tabs { height: 54px; flex: none; background: #e6e9ec; border-top: 1px solid #a8adb0; display: grid; align-items: center; grid-template-columns: 8px 300px 54px 362px 36px 10px 56px 58px 56px; }
.c-low { margin-top: 10px; }
.c-ctl { margin-top: -14px; }
.c-tab { height: 43px; margin-top: 10px; background: #fff; border-radius: 8px 8px 0 0; display: flex; align-items: center; padding-left: 16px; font-size: 14.5px; color: #5f6368; }
.c-tabtext { margin-left: 11px; width: 220px; white-space: nowrap; letter-spacing: -.27px; }
.c-tabx { margin-left: 10px; }
.c-bar { height: 42px; flex: none; display: flex; align-items: center; padding-top: 2px; }
.c-bar > .ic:nth-child(1) { margin-left: 17px; }
.c-bar > .ic:nth-child(2) { margin-left: 24px; }
.c-bar > .ic:nth-child(3) { margin-left: 24px; }
.omni { width: 592px; height: 35px; margin-left: 18px; background: #f1f3f4; border-radius: 18px; display: flex; align-items: center; padding-left: 4px; color: #5f6368; font-size: 16px; }
.vpn { width: 50px; height: 30px; border-radius: 15px; background: #dadce0; display: flex; align-items: center; justify-content: center; font-size: 15px; font-weight: 700; color: #666; letter-spacing: -1px; }
.vpn i { font-size: 24px; line-height: 28px; font-weight: 400; }
.om-info { margin-left: 11px; }
.om-arch { margin-left: 11px; width: 58px; font-size: 17.5px; letter-spacing: -.2px; white-space: nowrap; }
.om-sep { width: 1px; height: 22px; background: #5f6368; margin-left: 9px; }
.om-url { margin-left: 12px; width: 346px; color: #202124; font-size: 17px; white-space: nowrap; letter-spacing: .2px; }
.om-star { margin-left: 21px; }
.c-ext { width: 200px; margin-left: 8px; display: grid; grid-template-columns: repeat(5, 40px); justify-items: center; align-items: center; }
.c-avatar { width: 28px; height: 40px; border-radius: 14px; background: #e8eaed; display: flex; align-items: center; justify-content: center; }
.c-marks { height: 44px; flex: none; display: flex; align-items: center; padding: 0 0 2px 18px; border-bottom: 1px solid #dadce0; font-size: 15px; color: #3c4043; }
.mk-g { margin-left: 11px; width: 49px; }
.mk-ic { margin-left: 19px; }
.mk-a { margin-left: 11px; white-space: nowrap; }
.mk-sep { width: 1px; height: 36px; background: #dadce0; margin-left: auto; }
.mk-list { margin-left: 17px; }
.mk-r { margin-left: 11px; margin-right: 18px; white-space: nowrap; font-size: 14.5px; }
.p-bar { height: 70px; flex: none; background: #323639; display: grid; align-items: center; color: #fff; font-size: 15px; grid-template-columns: 80px 3px 166px 29px 39px 5px 40px 25px 1px 56px 57px 52px 2px 1px 8px 58px 34px 122px 40px 11px 40px 9px 40px; box-shadow: 0 2px 5px rgba(0,0,0,.4); position: relative; }
.p-title { font-weight: 700; font-size: 17px; white-space: nowrap; }
.p-num { height: 25px; background: #191b1c; display: flex; align-items: center; justify-content: center; font-size: 16px; }
.p-big { font-size: 18px; }
.p-of { font-size: 16.5px; white-space: nowrap; }
.p-sep { width: 1px; height: 18px; background: #5f6368; }
.p-body { height: 799px; flex: none; display: flex; background: #fff; }
.p-main { width: 917px; height: 799px; overflow: hidden; background: #fff; }
.p-top { height: 20px; background: #fff; }
.p-gap { height: 17px; background: linear-gradient(#3a3d40, #505356 50%, #3a3d40); }
.p-page { padding-left: 52px; width: 813px; height: 762px; overflow: hidden; color: #2c2c2c; font-family: "Liberation Serif", serif; font-size: 15px; line-height: 18px; }
.bk-head { height: 76px; padding-top: 56px; display: flex; align-items: center; font: 700 14px/20px Lato, "Liberation Sans", sans-serif; color: #333; }
.bk-head b { width: 42px; padding-left: 1px; }
.dia { font-size: 8px; width: 20px; }
.bk-head span { font-variant: small-caps; letter-spacing: .3px; white-space: nowrap; }
.bk-h { margin: 0; height: 61px; display: flex; align-items: flex-end; border-bottom: 2px solid #333; font: 700 21px/23px Lato, "Liberation Sans", sans-serif; color: #222; }
.bk-h span:first-child { width: 62px; font-weight: 400; }
.bk-ht { font-variant: small-caps; letter-spacing: 1.4px; white-space: nowrap; }
.bk-box { height: 156px; padding: 7px 0 0 181px; background: linear-gradient(#fff, #d8d9db); }
.ln { height: 18px; white-space: normal; overflow: hidden; }
.j { text-align: justify; text-align-last: justify; letter-spacing: -.12px; }
.w561 { width: 561px; }
.gap9 { margin-top: 9px; }
.gap10 { margin-top: 10px; }
.gap21 { margin-top: 21px; }
.gap27 { margin-top: 27px; }
.bl1 { display: flex; padding-left: 9px; }
.bl2 { display: flex; padding-left: 27px; }
.dia2 { font-size: 6px; width: 19px; }
.txt { margin-left: 181px; width: 580px; }
.ind { padding-left: 18px; }
.bold { font-weight: 700; color: #111; }
.bk-fig { width: 761px; height: 92px; }
.f-line path { stroke: #444; stroke-width: 1.1; fill: none; }
.f-cir circle { fill: #fff; stroke: #333; stroke-width: 1; }
.f-t { font: italic 13px "Liberation Serif", serif; fill: #333; }
.f-s { font-size: 9px; font-style: normal; }
.f-p { font: 12.5px "Liberation Serif", serif; fill: #333; }
.bk-figt { margin: 4px 0 0 182px; height: 19px; border-bottom: 1px solid #333; display: flex; align-items: center; font: 700 11.5px/18px Lato, "Liberation Sans", sans-serif; letter-spacing: 1px; color: #333; }
.tri { width: 0; height: 0; border: 5px solid transparent; border-bottom: 9px solid #333; border-top: 0; margin-right: 5px; }
.bk-figc { margin: 4px 0 0 182px; height: 18px; font: 700 12px/18px Lato, "Liberation Sans", sans-serif; color: #333; }
.bk-side { margin: 15px 0 0 635px; font-size: 12px; line-height: 16px; white-space: nowrap; }
.p-strip { width: 3px; background: #44474a; }
.p-vs { width: 20px; background: #f0f0f0; position: relative; }
.ar-up, .ar-dn { position: absolute; left: 5px; width: 0; height: 0; border: 5px solid transparent; }
.ar-up { top: 8px; border-bottom: 5px solid #505050; border-top: 0; }
.ar-dn { bottom: 7px; border-top: 5px solid #505050; border-bottom: 0; }
.p-thumb { position: absolute; top: 125px; left: 2px; width: 17px; height: 21px; background: #bebebe; }
.p-hs { height: 19px; flex: none; margin-left: -1px; background: #f0f0f0; position: relative; display: flex; align-items: center; }
.ar-l { margin-left: 6px; width: 0; height: 0; border: 5px solid transparent; border-right: 5px solid #505050; border-left: 0; }
.p-hthumb { position: absolute; left: 46px; top: 2px; width: 853px; height: 17px; background: #bebebe; }
.ar-r { margin-left: auto; margin-right: 30px; width: 0; height: 0; border: 5px solid transparent; border-left: 5px solid #a0a0a0; border-right: 0; }

/* TASKBAR */
.taskbar { height: 50px; flex: none; background: #1a2b2f; display: flex; align-items: center; color: #fff; }
.tb-win { margin-left: 20px; margin-right: 19px; }
.tb-search { width: 430px; height: 49px; margin-top: 1px; background: #f3f3f3; display: flex; align-items: center; padding-left: 15px; font-size: 18px; color: #222; }
.tb-search span { margin-left: 15px; letter-spacing: -.1px; white-space: nowrap; }
.tb-apps { display: flex; height: 50px; flex: none; }
.app { width: 60px; height: 50px; display: flex; align-items: center; justify-content: center; flex: none; }
.app:first-child { width: 62px; }
.app-act { background: #44555a; border-bottom: 3px solid #76b9ed; }
.app-on { position: relative; }
.app-on::after { content: ""; position: absolute; left: 6px; right: 6px; bottom: 0; height: 3px; background: #76b9ed; }
.tb-tray { display: flex; align-items: center; height: 50px; flex: 1; position: relative; }
.tr-w { margin-left: 27px; }
.tr-temp { margin-left: 13px; font-size: 19px; letter-spacing: -.3px; width: 37px; white-space: nowrap; }
.tr-up { margin-left: 20px; }
.tr-c { margin-left: 15px; }
.tr-t { margin-left: 8px; }
.tr-b { margin-left: 12px; }
.tr-p { margin-left: 16px; }
.tr-v { margin-left: 6px; }
.tr-f { margin-left: 12px; }
.tr-lang { margin-left: 13px; width: 26px; font-size: 15px; letter-spacing: -.3px; white-space: nowrap; }
.tr-clock { margin-left: 12px; width: 76px; display: flex; flex-direction: column; align-items: center; font-size: 15px; line-height: 25px; letter-spacing: -.2px; white-space: nowrap; }
.tr-n { margin-left: 21px; }
```
